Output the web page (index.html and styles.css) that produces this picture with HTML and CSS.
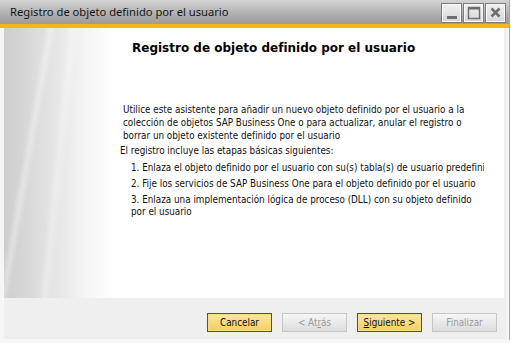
FILE: index.html
```html
<!DOCTYPE html>
<html lang="es">
<head>
  <meta charset="UTF-8" />
  <title>Registro de objeto definido por el usuario</title>
  <link rel="stylesheet" href="styles.css">
</head>
<body>
  <div class="ventana">
    <div class="barra-titulo">
      <span class="titulo">Registro de objeto definido por el usuario</span>
      <div class="controles">
        <span class="ctrl">
          <svg width="19" height="18" viewBox="0 0 19 18"><rect x="5" y="12" width="10" height="3" fill="#6e6e6e"/></svg>
        </span>
        <span class="ctrl">
          <svg width="19" height="18" viewBox="0 0 19 18"><rect x="4.5" y="3.5" width="11" height="11" fill="none" stroke="#6e6e6e" stroke-width="1.4"/><rect x="4.5" y="3.5" width="11" height="2" fill="#6e6e6e"/></svg>
        </span>
        <span class="ctrl">
          <svg width="19" height="18" viewBox="0 0 19 18"><path d="M5.5 4.5 L13.5 12.5 M13.5 4.5 L5.5 12.5" stroke="#6e6e6e" stroke-width="2.6"/></svg>
        </span>
      </div>
    </div>
    <div class="acento"></div>

    <div class="cuerpo">
      <div class="contenido">
        <h1 class="encabezado">Registro de objeto definido por el usuario</h1>

        <div class="texto">
          <p class="intro">Utilice este asistente para añadir un nuevo objeto definido por el usuario a la colección de objetos SAP Business One o para actualizar, anular el registro o borrar un objeto existente definido por el usuario</p>
          <p class="etapas">El registro incluye las etapas básicas siguientes:</p>
          <p class="paso unica">1. Enlaza el objeto definido por el usuario con su(s) tabla(s) de usuario predefinida(s)</p>
          <p class="paso">2. Fije los servicios de SAP Business One para el objeto definido por el usuario</p>
          <p class="paso">3. Enlaza una implementación lógica de proceso (DLL) con su objeto definido por el usuario</p>
        </div>
      </div>

      <div class="pie">
        <button class="btn activo">Cancelar</button>
        <button class="btn" disabled>&lt; At<u>r</u>ás</button>
        <button class="btn activo"><u>S</u>iguiente &gt;</button>
        <button class="btn" disabled>Finalizar</button>
      </div>
    </div>
  </div>
</body>
</html>
```

FILE: styles.css
```css
body {
  margin: 0;
  padding: 0;
  background-color: #f7f7f7;
  font-family: "DejaVu Sans Condensed", "DejaVu Sans", sans-serif;
  color: #111;
}

.ventana {
  width: 509px;
  height: 340px;
  border-right: 1px solid #a9a9a9;
  background-color: #f6f6f6;
}

.barra-titulo {
  height: 24px;
  display: flex;
  align-items: center;
  justify-content: space-between;
  padding: 0 3px 0 10px;
  background: linear-gradient(to bottom, #d4d4d4, #a8a8a8 70%, #9c9c9c);
}

.titulo {
  font-family: "Noto Sans", sans-serif;
  font-size: 11.2px;
  color: #141414;
  margin-top: -1px;
}

.controles {
  display: flex;
  gap: 1px;
  margin-top: 2px;
}

.ctrl {
  width: 19px;
  height: 18px;
  border: 1px solid #7c7c7c;
  background: linear-gradient(to bottom, #f0f0f0, #d6d6d6);
  box-shadow: inset 0 0 0 1px #fafafa;
  display: flex;
}

.acento {
  height: 4px;
  background-color: #f7b416;
}

.cuerpo {
  margin: 0 2px 0 4px;
}

.contenido {
  height: 270px;
  border-right: 3px solid #efefef;
  background:
    linear-gradient(100deg, transparent 40px, rgba(255,255,255,0.35) 46px, transparent 52px),
    linear-gradient(96deg, transparent 62px, rgba(255,255,255,0.3) 68px, transparent 76px),
    linear-gradient(to right, #cdcdcd 0, #e2e2e2 45px, #f6f6f6 85px, #fff 110px);
  overflow: hidden;
}

.encabezado {
  margin: 13px 0 0 128px;
  font-family: "DejaVu Sans", sans-serif;
  font-weight: bold;
  font-size: 12px;
  line-height: 14px;
  color: #000;
}

.texto {
  margin: 48px 0 0 116px;
  width: 364px;
  overflow: hidden;
  font-size: 9.8px;
  color: #111;
}

.texto p {
  margin: 0;
  line-height: 12px;
}

.texto .intro {
  padding-left: 3px;
  line-height: 13px;
}

.etapas {
  margin-top: 3px !important;
}

.paso {
  margin-top: 4px !important;
  padding-left: 11px;
}

.paso.unica {
  white-space: nowrap;
  margin-top: 5px !important;
}

.pie {
  height: 41px;
  box-sizing: border-box;
  background-color: #efefef;
  display: flex;
  justify-content: flex-end;
  align-items: flex-start;
  gap: 10px;
  padding: 15px 10px 0 0;
}

.btn {
  width: 65px;
  height: 19px;
  padding: 0;
  font-family: "DejaVu Sans Condensed", "DejaVu Sans", sans-serif;
  font-size: 9.8px;
  color: #9a9a9a;
  border: 1px solid #c6c6c6;
  background: linear-gradient(to bottom, #f7f7f7, #dcdcdc);
}

.btn.activo {
  color: #111;
  border: 1px solid #505050;
  background: linear-gradient(to bottom, #fce7a3, #f3cf5c);
  box-shadow: inset 0 0 0 1px #f8dc86;
}
```
